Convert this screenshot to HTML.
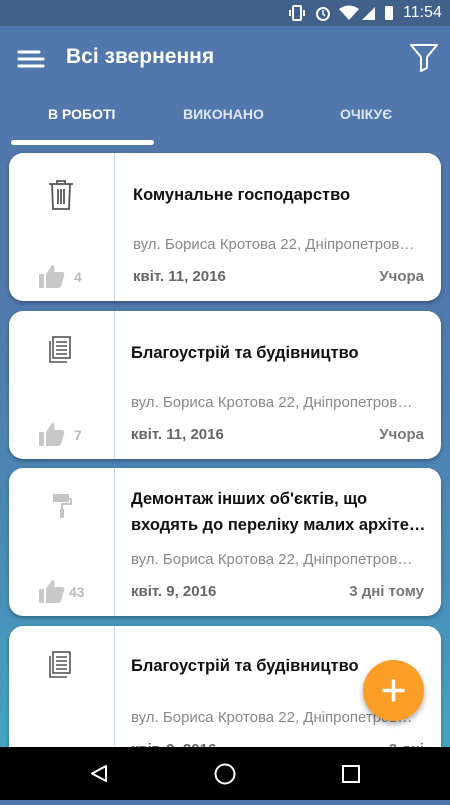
<!DOCTYPE html>
<html><head><meta charset="utf-8"><style>
*{margin:0;padding:0;box-sizing:border-box}
body{width:450px;height:800px;overflow:hidden;position:relative;font-family:"Liberation Sans","DejaVu Sans",sans-serif;background:linear-gradient(180deg,#5177ac 0%,#5177ac 35%,#4a8cb8 70%,#42aac6 100%)}
.sb{position:absolute;top:0;left:0;width:450px;height:26px;background:#41608a;color:#fff;font-size:15px}
.ab{position:absolute;top:26px;left:0;width:450px;height:124px;background:#5177ac}
.title{position:absolute;left:66px;top:19px;color:#fff;font-size:21px;font-weight:bold}
.tab{position:absolute;top:80px;color:#fff;font-size:14px;font-weight:bold}
.card{position:absolute;left:9px;width:432px;height:148px;background:#fff;border-radius:14px;box-shadow:0 2px 4px rgba(0,0,0,.3);overflow:hidden}
.div{position:absolute;left:105px;top:0;bottom:0;width:1px;background:#c9d6ea}
.h{position:absolute;left:122px;font-size:16.5px;font-weight:bold;color:#111;line-height:26px;width:292px}
.addr{position:absolute;left:122px;top:83px;font-size:15px;color:#888;white-space:nowrap;width:296px;overflow:hidden;text-overflow:ellipsis}
.date{position:absolute;left:122px;top:115px;font-size:15px;font-weight:bold;color:#666}
.ago{position:absolute;right:17px;top:115px;font-size:15px;font-weight:bold;color:#777}
.like{position:absolute;left:30px;top:112px}
.cnt{position:absolute;left:65px;top:116px;font-size:14px;font-weight:bold;color:#bbb}
.ic{position:absolute;left:38px;top:24px}
.nav{position:absolute;left:0;top:747px;width:450px;height:53px;background:#000}
.fab{position:absolute;left:363px;top:660px;width:61px;height:61px;border-radius:50%;background:#fb9e28;box-shadow:0 3px 6px rgba(0,0,0,.35)}
</style></head><body>
<div class="sb">
<svg style="position:absolute;left:289px;top:5px" width="150" height="16" viewBox="0 0 150 16"><g fill="#fff"><rect x="4" y="1" width="8" height="14" rx="1" fill="none" stroke="#fff" stroke-width="2"/><rect x="0" y="5" width="2" height="6"/><rect x="14" y="5" width="2" height="6"/>
<circle cx="34" cy="9" r="6" fill="none" stroke="#fff" stroke-width="2"/><path d="M34 5v4l2 2" stroke="#fff" stroke-width="1.5" fill="none"/>
<path d="M50 4q10-7 20 0l-10 11z"/><path d="M86 2v13h-13z"/><rect x="96" y="1" width="8" height="14" rx="1"/></g></svg>
<span style="position:absolute;left:403px;top:4px;font-size:16px">11:54</span>
</div>
<div class="ab">
<svg style="position:absolute;left:17px;top:23px" width="28" height="20"><g stroke="#fff" stroke-width="3" stroke-linecap="round"><path d="M2 3h20M2 10h24M2 17h24"/></g></svg>
<div class="title">Всі звернення</div>
<svg style="position:absolute;left:409px;top:16px" width="30" height="30" viewBox="0 0 30 30"><path d="M2 3h26L18 15v11l-6 3V15z" fill="none" stroke="#fff" stroke-width="2" stroke-linejoin="round"/></svg>
<div class="tab" style="left:48px">В РОБОТІ</div>
<div class="tab" style="left:183px;color:#dfe6f1">ВИКОНАНО</div>
<div class="tab" style="left:340px;color:#dfe6f1">ОЧІКУЄ</div>
<div style="position:absolute;left:11px;top:114px;width:143px;height:5px;border-radius:3px;background:#fff"></div>
</div>

<div class="card" style="top:153px"><div class="div"></div>
<svg class="ic" style="top:26px" width="28" height="32" viewBox="0 0 28 32"><g fill="none" stroke="#555" stroke-width="1.8"><path d="M2 5h24M10 5V2h8v3M5 5l1 25h16l1-25M11 10v15M14 10v15M17 10v15"/></g></svg>
<div class="h" style="left:124px;top:29px">Комунальне господарство</div>
<div class="addr" style="left:124px">вул. Бориса Кротова 22, Дніпропетров…</div>
<svg class="like" width="26" height="24" viewBox="0 0 26 24"><g fill="#c8c8c8"><rect x="0" y="9" width="5" height="14"/><path d="M7 9l6-9c3 0 3 3 2 7h8c2 0 3 2 2 4l-3 10c-1 2-2 2-4 2H7z"/></g></svg>
<div class="cnt">4</div>
<div class="date" style="left:124px">квіт. 11, 2016</div><div class="ago">Учора</div></div>

<div class="card" style="top:311px"><div class="div"></div>
<svg class="ic" width="28" height="30" viewBox="0 0 28 30"><g fill="none" stroke="#555" stroke-width="1.6"><rect x="6" y="2" width="17" height="21"/><path d="M3 6v21h17M9 7h11M9 11h11M9 15h11M9 19h11"/></g></svg>
<div class="h" style="top:29px">Благоустрій та будівництво</div>
<div class="addr">вул. Бориса Кротова 22, Дніпропетров…</div>
<svg class="like" width="26" height="24" viewBox="0 0 26 24"><g fill="#c8c8c8"><rect x="0" y="9" width="5" height="14"/><path d="M7 9l6-9c3 0 3 3 2 7h8c2 0 3 2 2 4l-3 10c-1 2-2 2-4 2H7z"/></g></svg>
<div class="cnt">7</div>
<div class="date">квіт. 11, 2016</div><div class="ago">Учора</div></div>

<div class="card" style="top:468px"><div class="div"></div>
<svg class="ic" width="28" height="30" viewBox="0 0 28 30"><g fill="#c4c4c4"><rect x="6" y="2" width="16" height="8"/><path d="M22 6h3v7h-9v4h-2v-6h9V8h-1z"/><rect x="13" y="17" width="4" height="9"/></g></svg>
<div class="h" style="top:18px;width:295px">Демонтаж інших об'єктів, що входять до переліку малих архіте…</div>
<div class="addr">вул. Бориса Кротова 22, Дніпропетров…</div>
<svg class="like" width="26" height="24" viewBox="0 0 26 24"><g fill="#c8c8c8"><rect x="0" y="9" width="5" height="14"/><path d="M7 9l6-9c3 0 3 3 2 7h8c2 0 3 2 2 4l-3 10c-1 2-2 2-4 2H7z"/></g></svg>
<div class="cnt" style="left:60px">43</div>
<div class="date">квіт. 9, 2016</div><div class="ago">3 дні тому</div></div>

<div class="card" style="top:626px"><div class="div"></div>
<svg class="ic" width="28" height="30" viewBox="0 0 28 30"><g fill="none" stroke="#555" stroke-width="1.6"><rect x="6" y="2" width="17" height="21"/><path d="M3 6v21h17M9 7h11M9 11h11M9 15h11M9 19h11"/></g></svg>
<div class="h" style="top:27px">Благоустрій та будівництво</div>
<div class="addr">вул. Бориса Кротова 22, Дніпропетров…</div>
<div class="date">квіт. 9, 2016</div><div class="ago">3 дні</div></div>

<div class="fab"><svg width="61" height="61"><path d="M30.5 21v19M21 30.5h19" stroke="#fff" stroke-width="3.5" stroke-linecap="round"/></svg></div>

<div class="nav"><svg width="450" height="53"><g fill="none" stroke="#fff" stroke-width="2"><path d="M106 19v15l-14-7.5z" stroke-linejoin="round"/><circle cx="225" cy="27" r="9.5"/><rect x="343" y="19" width="16" height="16"/></g></svg></div>
</body></html>
